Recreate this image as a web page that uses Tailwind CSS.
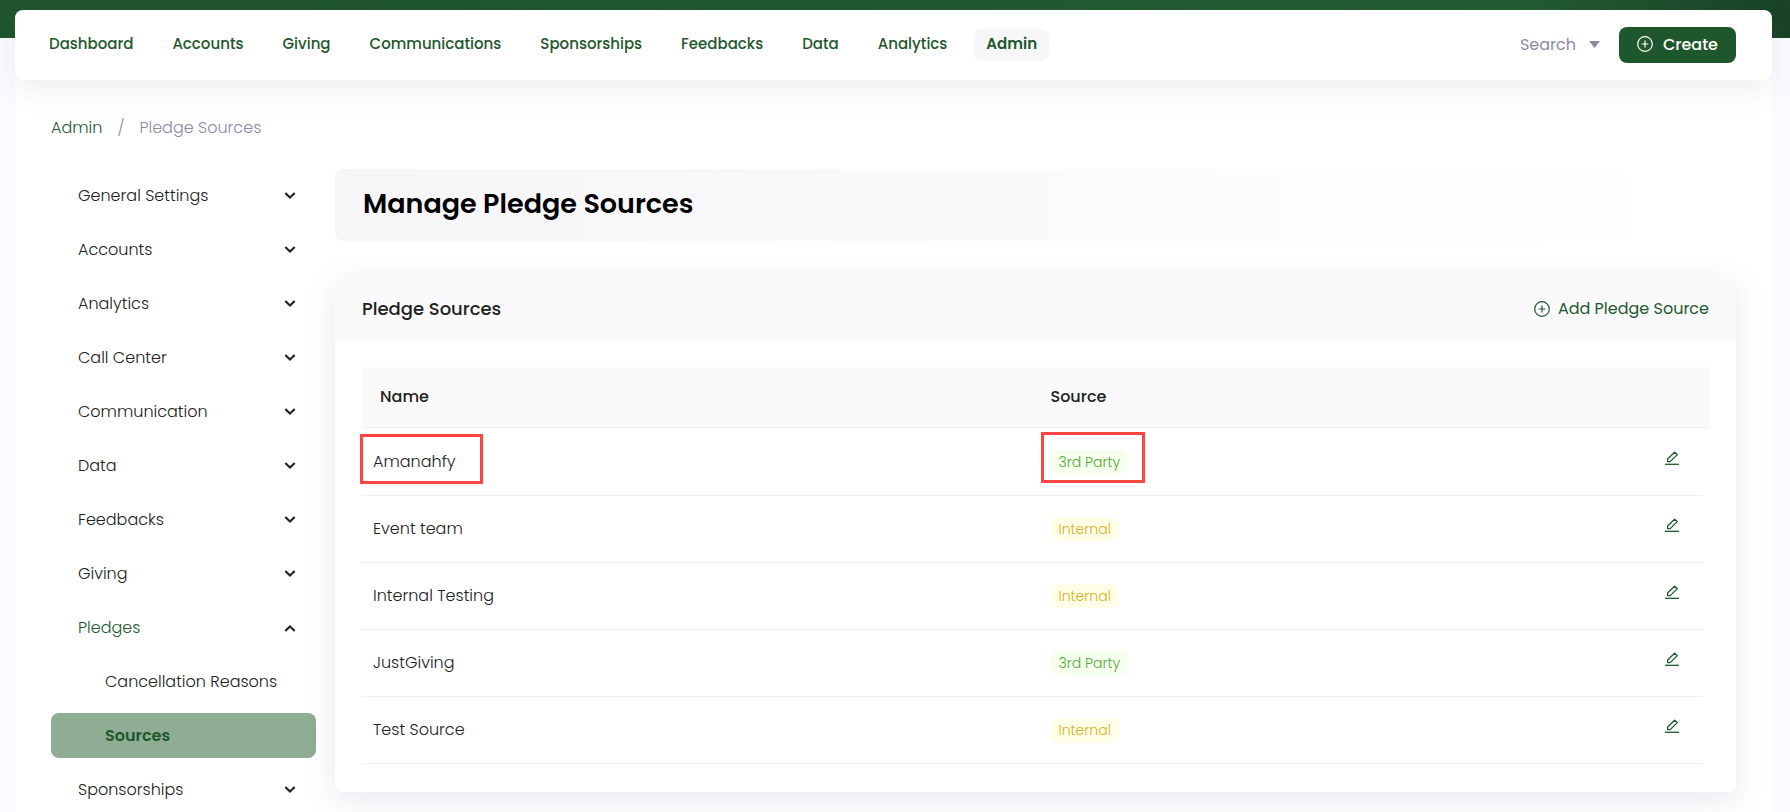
<!DOCTYPE html>
<html lang="en">
<head>
    <meta charset="UTF-8">
    <meta name="viewport" content="width=device-width, initial-scale=1.0">
    <title>Manage Pledge Sources</title>
    <script src="https://cdn.jsdelivr.net/npm/@tailwindcss/browser@4"></script>
</head>
<body class="bg-[#fafaff] font-['Poppins','Inter',sans-serif] text-base text-[#212121]">
    <!-- Shared icons -->
    <svg class="hidden">
        <symbol id="chevron" viewBox="0 0 12 12">
            <path d="M1.3 2.9 6 7.5l4.7-4.6" fill="none" stroke="currentColor" stroke-width="2.1"/>
        </symbol>
        <symbol id="plus-circle" viewBox="0 0 16 16">
            <circle cx="8" cy="8" r="7.3" fill="none" stroke="currentColor" stroke-width="1.2"/>
            <path d="M8 4.6v6.8M4.6 8h6.8" fill="none" stroke="currentColor" stroke-width="1.2"/>
        </symbol>
        <symbol id="edit" viewBox="0 0 14 14">
            <path d="M2.6 10.6V8L9.6 1.2 12.3 3.6 5.2 10.6Z" fill="none" stroke="currentColor" stroke-width="1.3" stroke-linejoin="round"/>
            <path d="M0 13.3h14" stroke="currentColor" stroke-width="1.3"/>
        </symbol>
    </svg>

    <div class="bg-linear-to-r from-[#20552d] via-[#235c32] via-85% to-[#194227] bg-[length:100%_38px] bg-no-repeat pt-[10px] pr-[18px] pl-[15px]">
        <!-- Top navigation -->
        <header class="relative z-10 flex h-[70px] items-center justify-between rounded-lg bg-white pr-9 pl-[22px] shadow-[0_10px_30px_0_rgba(62,73,105,0.09)]">
            <nav class="flex items-center gap-[15px] text-[15px] leading-6 font-medium text-[#1f572c]">
                <a href="#" class="rounded-lg px-3 pt-[3px] pb-[5px]">Dashboard</a>
                <a href="#" class="rounded-lg px-3 pt-[3px] pb-[5px]">Accounts</a>
                <a href="#" class="rounded-lg px-3 pt-[3px] pb-[5px]">Giving</a>
                <a href="#" class="rounded-lg px-3 pt-[3px] pb-[5px]">Communications</a>
                <a href="#" class="rounded-lg px-3 pt-[3px] pb-[5px]">Sponsorships</a>
                <a href="#" class="rounded-lg px-3 pt-[3px] pb-[5px]">Feedbacks</a>
                <a href="#" class="rounded-lg px-3 pt-[3px] pb-[5px]">Data</a>
                <a href="#" class="rounded-lg px-3 pt-[3px] pb-[5px]">Analytics</a>
                <a href="#" class="rounded-lg bg-[#f7f7fa] px-3 pt-[3px] pb-[5px] font-semibold">Admin</a>
            </nav>
            <div class="flex items-center gap-[19px]">
                <div class="relative text-[#8a8aa3]">
                    <select aria-label="Search" class="w-20 appearance-none bg-transparent">
                        <option>Search</option>
                    </select>
                    <svg class="pointer-events-none absolute top-2 right-0 h-[7px] w-[11px]" viewBox="0 0 11 7"><path d="M0 0h11L5.5 7z" fill="currentColor"/></svg>
                </div>
                <button class="flex h-9 items-center gap-[10px] rounded-lg bg-[#1f572c] px-[18px] font-medium text-white">
                    <svg class="mb-[2px] size-4"><use href="#plus-circle"/></svg>
                    Create
                </button>
            </div>
        </header>

        <div class="bg-white pr-9 pb-5 pl-9">
            <nav aria-label="Breadcrumb" class="flex items-center gap-[15px] pt-9 font-light">
                <a href="#" class="text-[#1f572c]">Admin</a>
                <span class="text-[#8a8aa3]">/</span>
                <span class="text-[#8a8aa3]">Pledge Sources</span>
            </nav>

            <div class="flex items-start gap-[19px] pt-[29px]">
                <!-- Settings menu -->
                <aside class="-mb-6 flex w-[265px] shrink-0 flex-col gap-[9px] pt-1 font-light">
                    <button class="flex h-[45px] items-center justify-between px-5 pl-[27px]">General Settings <svg class="size-3"><use href="#chevron"/></svg></button>
                    <button class="flex h-[45px] items-center justify-between px-5 pl-[27px]">Accounts <svg class="size-3"><use href="#chevron"/></svg></button>
                    <button class="flex h-[45px] items-center justify-between px-5 pl-[27px]">Analytics <svg class="size-3"><use href="#chevron"/></svg></button>
                    <button class="flex h-[45px] items-center justify-between px-5 pl-[27px]">Call Center <svg class="size-3"><use href="#chevron"/></svg></button>
                    <button class="flex h-[45px] items-center justify-between px-5 pl-[27px]">Communication <svg class="size-3"><use href="#chevron"/></svg></button>
                    <button class="flex h-[45px] items-center justify-between px-5 pl-[27px]">Data <svg class="size-3"><use href="#chevron"/></svg></button>
                    <button class="flex h-[45px] items-center justify-between px-5 pl-[27px]">Feedbacks <svg class="size-3"><use href="#chevron"/></svg></button>
                    <button class="flex h-[45px] items-center justify-between px-5 pl-[27px]">Giving <svg class="size-3"><use href="#chevron"/></svg></button>
                    <button class="flex h-[45px] items-center justify-between px-5 pl-[27px] text-[#1f572c]" aria-expanded="true">Pledges <svg class="size-3 rotate-180 text-[#212121]"><use href="#chevron"/></svg></button>
                    <a href="#" class="flex h-[45px] items-center pl-[54px]">Cancellation Reasons</a>
                    <a href="#" class="flex h-[45px] items-center rounded-lg bg-[#8fad92] pl-[54px] font-semibold text-[#1f572c]" aria-current="page">Sources</a>
                    <button class="flex h-[45px] items-center justify-between px-5 pl-[27px]">Sponsorships <svg class="size-3"><use href="#chevron"/></svg></button>
                </aside>

                <main class="min-w-0 flex-1">
                    <div class="flex h-[72px] items-center rounded-lg bg-linear-to-r from-[#f6f6f9] to-white px-7 pb-[2px]">
                        <h1 class="text-[27px] font-semibold text-black">Manage Pledge Sources</h1>
                    </div>

                    <section class="mt-[35px] rounded-lg bg-white shadow-[0_8px_32px_0_rgba(62,73,125,0.12)]">
                        <div class="flex h-[65px] items-center justify-between rounded-t-lg bg-[#fafafc] px-[27px]">
                            <h2 class="text-lg font-medium">Pledge Sources</h2>
                            <a href="#" class="flex items-center gap-2 text-[#1f572c]">
                                <svg class="size-4"><use href="#plus-circle"/></svg>
                                Add Pledge Source
                            </a>
                        </div>
                        <div class="px-[27px] pt-[26px] pb-7">
                            <table class="w-full table-fixed border-separate border-spacing-0 text-left">
                                <thead>
                                    <tr class="h-[61px] bg-[#fafafa]">
                                        <th class="w-1/2 border-b border-[#f0f0f0] pl-[18px] font-medium">Name</th>
                                        <th class="border-b border-[#f0f0f0] pl-[15px] font-medium">Source</th>
                                        <th class="w-16 border-b border-[#f0f0f0]"></th>
                                        <th class="w-[6px] border-b border-[#f0f0f0]"></th>
                                    </tr>
                                </thead>
                                <tbody class="font-light">
                                    <tr class="h-[68px]">
                                        <td class="relative border-b border-[#f0f0f0] pl-[11px]">
                                            Amanahfy
                                            <span class="absolute top-[6px] -left-[2px] h-[50px] w-[123px] border-3 border-[#ff4444]"></span>
                                        </td>
                                        <td class="relative border-b border-[#f0f0f0] pl-[15px]">
                                            <span class="inline-block rounded-lg bg-[#f6ffed] px-2 text-sm leading-6 text-[#52a832]">3rd Party</span>
                                            <span class="absolute top-[4px] left-[5px] h-[51px] w-[104px] border-3 border-[#ff4444]"></span>
                                        </td>
                                        <td class="border-b border-[#f0f0f0] pb-2 pl-[26px]"><button aria-label="Edit Amanahfy" class="block text-[#1f572c]"><svg class="size-[14px]"><use href="#edit"/></svg></button></td>
                                    </tr>
                                    <tr class="h-[67px]">
                                        <td class="border-b border-[#f0f0f0] pl-[11px]">Event team</td>
                                        <td class="border-b border-[#f0f0f0] pl-[15px]"><span class="inline-block rounded-lg bg-[#feffe6] px-2 text-sm leading-6 text-[#d8b023]">Internal</span></td>
                                        <td class="border-b border-[#f0f0f0] pb-2 pl-[26px]"><button aria-label="Edit Event team" class="block text-[#1f572c]"><svg class="size-[14px]"><use href="#edit"/></svg></button></td>
                                    </tr>
                                    <tr class="h-[67px]">
                                        <td class="border-b border-[#f0f0f0] pl-[11px]">Internal Testing</td>
                                        <td class="border-b border-[#f0f0f0] pl-[15px]"><span class="inline-block rounded-lg bg-[#feffe6] px-2 text-sm leading-6 text-[#d8b023]">Internal</span></td>
                                        <td class="border-b border-[#f0f0f0] pb-2 pl-[26px]"><button aria-label="Edit Internal Testing" class="block text-[#1f572c]"><svg class="size-[14px]"><use href="#edit"/></svg></button></td>
                                    </tr>
                                    <tr class="h-[67px]">
                                        <td class="border-b border-[#f0f0f0] pl-[11px]">JustGiving</td>
                                        <td class="border-b border-[#f0f0f0] pl-[15px]"><span class="inline-block rounded-lg bg-[#f6ffed] px-2 text-sm leading-6 text-[#52a832]">3rd Party</span></td>
                                        <td class="border-b border-[#f0f0f0] pb-2 pl-[26px]"><button aria-label="Edit JustGiving" class="block text-[#1f572c]"><svg class="size-[14px]"><use href="#edit"/></svg></button></td>
                                    </tr>
                                    <tr class="h-[67px]">
                                        <td class="border-b border-[#f0f0f0] pl-[11px]">Test Source</td>
                                        <td class="border-b border-[#f0f0f0] pl-[15px]"><span class="inline-block rounded-lg bg-[#feffe6] px-2 text-sm leading-6 text-[#d8b023]">Internal</span></td>
                                        <td class="border-b border-[#f0f0f0] pb-2 pl-[26px]"><button aria-label="Edit Test Source" class="block text-[#1f572c]"><svg class="size-[14px]"><use href="#edit"/></svg></button></td>
                                    </tr>
                                </tbody>
                            </table>
                        </div>
                    </section>
                </main>
            </div>
        </div>
    </div>
</body>
</html>
